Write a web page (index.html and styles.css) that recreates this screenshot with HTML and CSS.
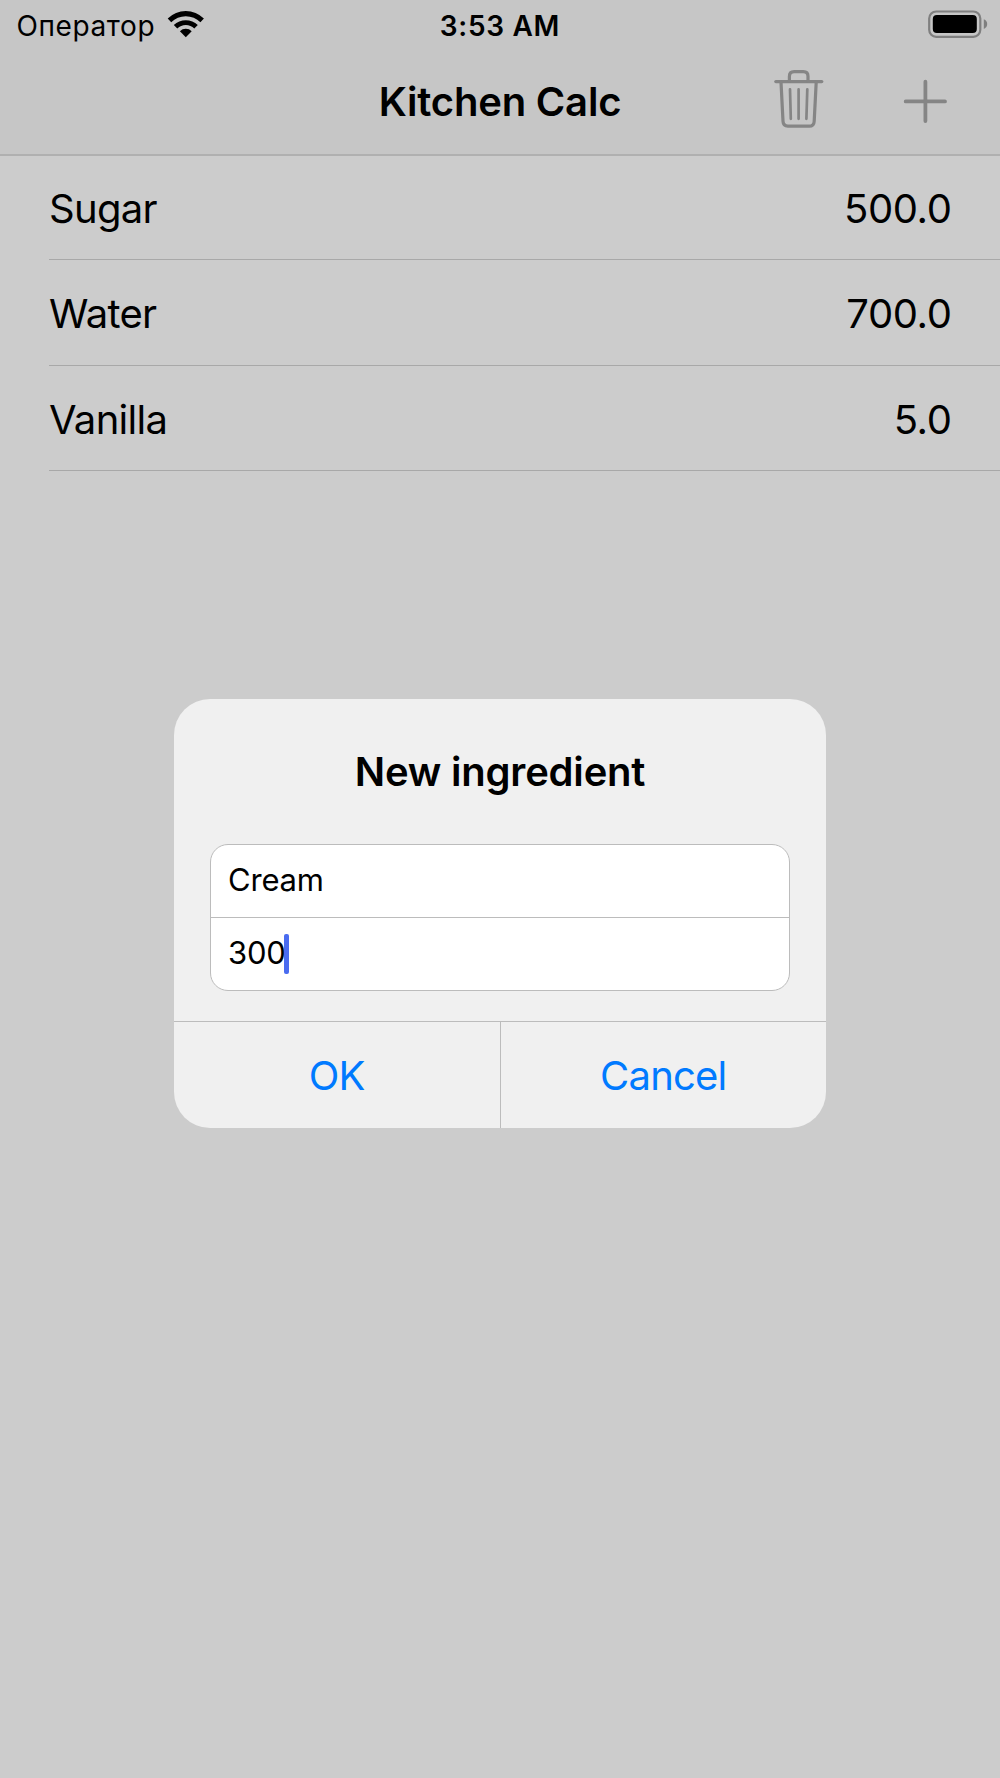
FILE: index.html
```html
<!DOCTYPE html>
<html lang="en">
<head>
  <meta charset="UTF-8">
  <meta name="viewport" content="width=device-width, initial-scale=1.0">
  <title>Kitchen Calc</title>
  <link rel="stylesheet" href="styles.css">
</head>
<body>
  <header class="header">
    <div class="status-bar">
      <div class="carrier">
        <span class="carrier-name">Оператор</span>
        <svg class="wifi" width="38" height="28" viewBox="0 0 38 28">
          <path d="M0.7 8.6 A25.6 25.6 0 0 1 36.9 8.6 L33.4 12.2 A20.6 20.6 0 0 0 4.2 12.2 Z"/>
          <path d="M6.8 15.1 A17 17 0 0 1 30.8 15.1 L27.3 18.6 A12 12 0 0 0 10.3 18.6 Z"/>
          <path d="M12.9 21.2 A8.4 8.4 0 0 1 24.7 21.2 L18.8 27.2 Z"/>
        </svg>
      </div>
      <div class="time">3:53 AM</div>
      <div class="battery">
        <svg width="60" height="28" viewBox="0 0 60 28">
          <rect x="1.2" y="1.5" width="51.1" height="25.3" rx="7" fill="none" stroke="#7f7f7f" stroke-width="2.2"/>
          <rect x="4.8" y="5.1" width="44" height="18" rx="4"/>
          <path d="M55.8 9.2 Q59.2 10.7 59.2 14.1 Q59.2 17.5 55.8 19 Z" fill="#7f7f7f"/>
        </svg>
      </div>
    </div>
    <nav class="nav-bar">
      <h1 class="nav-title">Kitchen Calc</h1>
      <div class="nav-actions">
        <button class="icon-button" aria-label="Delete">
          <svg width="50" height="66" viewBox="0 0 50 66" fill="none" stroke="#858585" stroke-width="3.2" stroke-linecap="round" stroke-linejoin="round">
            <path d="M1.8 13.6 H47.8"/>
            <path d="M15.4 13.2 V8.4 Q15.4 3.6 20.2 3.6 H29.3 Q34 3.6 34 8.4 V13.2"/>
            <path d="M7 14.2 L9 53.2 Q9.2 58.2 14 58.2 H35.2 Q40 58.2 40.2 53.2 L42.2 14.2"/>
            <path d="M16 21.4 L16.8 50.8 M24.6 21.4 V50.8 M33.3 21.4 L32.4 50.8" stroke-width="2.7"/>
          </svg>
        </button>
        <button class="icon-button" aria-label="Add">
          <svg width="44" height="44" viewBox="0 0 44 44" fill="none" stroke="#858585" stroke-width="3.8" stroke-linecap="round">
            <path d="M22.4 2.7 V42 M2.7 22.4 H42"/>
          </svg>
        </button>
      </div>
    </nav>
  </header>

  <ul class="ingredients">
    <li class="ingredient"><span>Sugar</span><span class="amount">500.0</span></li>
    <li class="ingredient"><span>Water</span><span class="amount">700.0</span></li>
    <li class="ingredient"><span>Vanilla</span><span class="amount">5.0</span></li>
  </ul>

  <div class="overlay">
    <div class="dialog" role="dialog">
      <h2 class="dialog-title">New ingredient</h2>
      <div class="fields">
        <div class="field"><span class="value">Cream</span></div>
        <div class="field"><span class="value">300</span><span class="caret"></span></div>
      </div>
      <div class="dialog-actions">
        <button class="dialog-button">OK</button>
        <button class="dialog-button">Cancel</button>
      </div>
    </div>
  </div>
</body>
</html>
```

FILE: styles.css
```css
* {
  box-sizing: border-box;
}
body {
  margin: 0;
  min-height: 1778px;
  font-family: Inter, "Liberation Sans", sans-serif;
  font-size: 40px;
  color: #000;
  background-color: #ccc;
}
button {
  margin: 0;
  padding: 0;
  border: none;
  background: none;
  font: inherit;
}
svg {
  display: block;
}
.header {
  height: 156px;
  background-color: #c6c6c6;
  border-bottom: 2px solid #b0b0b0;
}
.status-bar {
  display: grid;
  grid-template-columns: 1fr auto 1fr;
  height: 50px;
  font-size: 28px;
  line-height: 52px;
}
.carrier {
  display: flex;
  gap: 11.5px;
  padding-left: 16.5px;
  letter-spacing: 0.6px;
}
.wifi {
  margin-top: 10px;
}
.time {
  font-weight: 600;
  letter-spacing: 0.7px;
}
.battery {
  display: flex;
  justify-content: flex-end;
  padding: 10px 12px 0 0;
}
.nav-bar {
  display: grid;
  grid-template-columns: 1fr auto 1fr;
  height: 104px;
}
.nav-title {
  grid-column: 2;
  margin: 0;
  font-size: 40px;
  font-weight: 600;
  line-height: 103px;
  letter-spacing: -0.2px;
}
.nav-actions {
  display: flex;
  justify-content: flex-end;
  gap: 79px;
  padding: 19px 53px 0 0;
}
.icon-button {
  display: flex;
  align-items: center;
  height: 64px;
}
.ingredients {
  margin: -1px 0 0;
  padding: 0 0 0 49px;
  list-style: none;
}
.ingredient {
  display: flex;
  justify-content: space-between;
  height: 105.4px;
  padding-right: 48.5px;
  border-bottom: 1px solid #a8a8a8;
  line-height: 107px;
  letter-spacing: -0.7px;
}
.amount {
  letter-spacing: -0.4px;
}
.overlay {
  position: absolute;
  top: 0;
  left: 0;
  display: flex;
  width: 100%;
  height: 1778px;
  padding-top: 699px;
  justify-content: center;
  align-items: flex-start;
}
.dialog {
  width: 652px;
  height: 429px;
  border-radius: 36px;
  background-color: #f0f0f0;
  overflow: hidden;
}
.dialog-title {
  height: 145px;
  margin: 0;
  font-size: 40px;
  font-weight: 600;
  line-height: 145px;
  letter-spacing: -0.2px;
  text-align: center;
}
.fields {
  height: 147px;
  margin: 0 36px;
  border: 1px solid #bcbcbc;
  border-radius: 18px;
  background-color: #fff;
}
.field {
  display: flex;
  align-items: center;
  height: 72px;
  padding-left: 17px;
  font-size: 31px;
}
.field + .field {
  height: 73px;
  border-top: 1px solid #bcbcbc;
}
.value {
  padding-bottom: 4px;
  letter-spacing: -0.2px;
}
.caret {
  width: 5px;
  height: 40px;
  margin-left: -2px;
  border-radius: 2px;
  background-color: #4a6cf0;
}
.dialog-actions {
  display: flex;
  height: 107px;
  margin-top: 30px;
  border-top: 1px solid #bcbcbc;
}
.dialog-button {
  flex: 1;
  color: #007aff;
  letter-spacing: -0.8px;
}
.dialog-button + .dialog-button {
  border-left: 1px solid #bcbcbc;
}
```
